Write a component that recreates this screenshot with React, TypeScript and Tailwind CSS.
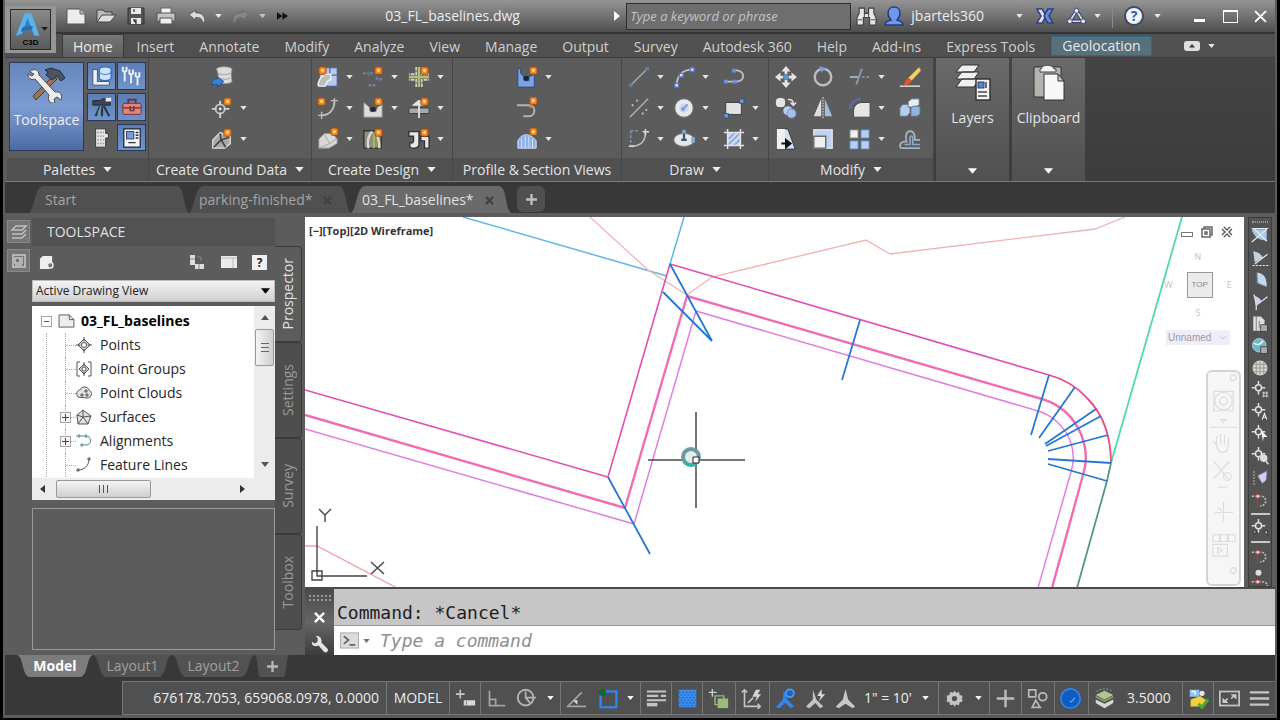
import type { ReactNode } from "react";

const ORANGE = "#f08a2c";

function Icon({ children, className = "size-[22px]" }: { children: ReactNode; className?: string }) {
  return (
    <svg viewBox="0 0 24 24" fill="none" className={`${className} shrink-0`} aria-hidden="true">
      {children}
    </svg>
  );
}

function Badge({ x = 18, y = 5 }: { x?: number; y?: number }) {
  return (
    <g>
      <rect x={x - 4} y={y - 4} width="8" height="8" rx="2" fill={ORANGE} stroke="#9c4a10" />
      <circle cx={x} cy={y} r="1.6" fill="#ffe08a" />
    </g>
  );
}

function Caret({ label, className = "text-[#e6e6e6]" }: { label: string; className?: string }) {
  return (
    <button type="button" aria-label={label} className={`flex h-4 w-[10px] shrink-0 items-center justify-center ${className}`}>
      <svg viewBox="0 0 8 5" className="h-[4px] w-[7px]">
        <path d="M0 0h8L4 5z" fill="currentColor" />
      </svg>
    </button>
  );
}

const icons: Record<string, ReactNode> = {
  importSurvey: (
    <>
      <path d="M6 3c2-3 14-3 17 0l-1 6 1 8c-2 3-13 3-16 0l1-7z" fill="#dcdcdc" stroke="#8a8a8a" />
      <path d="M8 8c4 2 9 2 13 0M9 13c4 2 9 2 12 0" stroke="#9a9a9a" />
      <path d="M1 17c2-3 5-3 6-3v-2l7 5-7 6v-3c-3 0-4 0-6 1z" fill="#3b82d6" stroke="#1c4f96" />
    </>
  ),
  points: (
    <>
      <circle cx="10" cy="13" r="5" stroke="#c4c4c4" strokeWidth="2" />
      <path d="M10 4v5M10 17v6M1 13h5M14 13h6" stroke="#d4d4d4" strokeWidth="2" />
      <circle cx="10" cy="13" r="1.5" fill="#eee" />
      <Badge />
    </>
  ),
  surfaces: (
    <>
      <path d="M2 13l8-8 11 4v8l-6 5H2z" fill="#a8a8a8" stroke="#dcdcdc" strokeWidth="1.5" />
      <path d="M3 21l8-8 5 8M10 6l1 7 9-3" stroke="#444" strokeWidth="1.8" />
      <Badge />
    </>
  ),
  parcel: (
    <>
      <path d="M3 2h19v20H5l-2-6z" fill="#b9cbe8" stroke="#3d5f99" />
      <path d="M14 2v8M14 10h8" stroke="#3f6fd0" strokeWidth="1.5" />
      <path d="M1 20C3 11 9 8 15 9v6c-4 0-5 3-6 7H2z" stroke="#f2f2f2" strokeWidth="1.5" fill="#bdbdbd" />
      <Badge x={6} />
    </>
  ),
  featureLine: (
    <>
      <path d="M5 20C13 20 19 14 19 5" stroke="#c0c0c0" strokeWidth="2" />
      <path d="M5 16v8M1 20h8M19 1v8M15 4h8" stroke="#c0c0c0" strokeWidth="1.5" />
      <Badge x={5} />
    </>
  ),
  grading: (
    <>
      <path d="M2 22V12l6-6h9l5 6v5l-9 5z" fill="#d8d8d8" stroke="#8f8f8f" />
      <path d="M8 7l6 10 7-5M2 22l12-5" stroke="#a4a4a4" />
      <Badge x={19} y={4} />
    </>
  ),
  alignment: (
    <>
      <path d="M1 8h6M9 8h5M15 14h7M7 21h8" stroke="#7c8994" strokeWidth="2" strokeDasharray="3 1.5" />
      <path d="M8 6v5M15 11l6 6" stroke="#4b7aa5" strokeWidth="2" />
      <Badge />
    </>
  ),
  profile: (
    <>
      <path d="M2 6l6 5 1 5h6l2-5 5-3v14H2z" fill="#dcdcdc" stroke="#8a8a8a" />
      <rect x="9" y="11" width="6" height="5" rx="2" fill="#262626" />
      <Badge />
    </>
  ),
  corridor: (
    <>
      <path d="M2 3h19v19H2z" fill="#8f8f80" stroke="#333" strokeWidth="1.5" />
      <path d="M7 22C5 12 8 7 11 4M19 22c0-8-1-13-5-18" stroke="#dcdcd0" strokeWidth="2.5" />
      <path d="M13 22V6" stroke="#9ec640" strokeWidth="2" />
      <Badge />
    </>
  ),
  intersection: (
    <>
      <path d="M9 1v8H1M15 1v8h8M9 23v-8H1M15 23v-8h8" stroke="#cfcfcf" strokeWidth="2" strokeDasharray="4 1" />
      <path d="M12 1v22M1 12h22" stroke="#b3c26a" strokeWidth="2.5" />
      <Badge />
    </>
  ),
  assembly: (
    <>
      <path d="M1 12h22v6H1z" fill="#a8a8a8" stroke="#3c3c3c" />
      <path d="M5 9h12V4h-6z" fill="#ececec" stroke="#ddd" />
      <path d="M12 4v19" stroke="#e2e2e2" strokeWidth="2" />
      <Badge />
    </>
  ),
  pipeNetwork: (
    <>
      <path d="M1 4h11v14c0 4-6 5-10 3v-5c3 1 4 0 4-2V9H1z" fill="#e8e8e8" stroke="#333" strokeWidth="1.5" />
      <path d="M14 9h9v13h-5V14h-4z" fill="#e8e8e8" stroke="#333" strokeWidth="1.5" />
      <Badge />
    </>
  ),
  profileView: (
    <>
      <path d="M2 2l3 2v4l4 4v4h5v-4l6-3v14H2z" fill="#7ba2e4" stroke="#2d4a80" />
      <rect x="8" y="11" width="6" height="5" rx="2" fill="#15233f" />
      <Badge x={19} y={5} />
    </>
  ),
  sampleLines: (
    <>
      <path d="M1 9h13c8 0 8 12 0 12H8" stroke="#b2b2b2" strokeWidth="2.2" />
      <path d="M15 12l4-6" stroke="#e08050" strokeWidth="2" />
      <Badge x={19} y={4} />
    </>
  ),
  sectionViews: (
    <>
      <path d="M2 22v-8c5-9 13-9 20 0v8z" fill="#8fb0ec" stroke="#d9e4fa" />
      <path d="M6 22V12M10 22V9M14 22V9M18 22V12" stroke="#dbe6fa" />
      <Badge x={19} y={4} />
    </>
  ),
  line: (
    <>
      <path d="M3 21L21 3" stroke="#a4abb3" strokeWidth="1.6" />
      <path d="M1 19h4v4H1zM19 1h4v4h-4z" fill="#5b80a8" />
    </>
  ),
  arc: (
    <>
      <path d="M4 21C4 11 10 4 21 4" stroke="#c0c0c0" strokeWidth="2" />
      <path d="M2 19h4v4H2zM7 8h4v4H7zM19 2h4v4h-4z" fill="#dde6fa" stroke="#5a76d6" strokeWidth="1.4" />
    </>
  ),
  polyline: (
    <>
      <path d="M12 5c12-2 14 12 2 12H2" stroke="#b8bec9" strokeWidth="2" />
      <path d="M10 3h4v4h-4zM11 15h4v4h-4zM1 15h4v4H1z" fill="#6c8fe0" />
    </>
  ),
  xline: (
    <>
      <path d="M2 22L22 2" stroke="#b0b0b0" strokeWidth="1.6" />
      <path d="M4 9h2M9 4h2M15 18h2M19 14h2" stroke="#c8c8c8" strokeWidth="2" />
    </>
  ),
  circle: (
    <>
      <circle cx="12" cy="12" r="10" fill="#e6e9ee" stroke="#7a7a7a" />
      <circle cx="12" cy="12" r="5" fill="#cdd6ec" />
      <path d="M11 13l5-5" stroke="#7c96dc" strokeWidth="2" />
      <circle cx="11" cy="13" r="2" fill="#7f98dc" />
    </>
  ),
  rectangle: (
    <>
      <rect x="3" y="6" width="17" height="13" fill="#e2e2e2" stroke="#3c3c3c" />
      <path d="M18 2h5v5h-5zM1 18h5v5H1z" fill="#6c97c6" stroke="#2d5586" />
    </>
  ),
  spline: (
    <>
      <path d="M3 3v17M3 3h10" stroke="#7f93b5" strokeWidth="1.8" strokeDasharray="3 2" />
      <path d="M4 20c10 0 15-6 15-15" stroke="#b8bec6" strokeWidth="1.8" />
      <path d="M16 4h7M19 1v7M1 20h6" stroke="#dadada" strokeWidth="1.6" />
    </>
  ),
  ellipse: (
    <>
      <ellipse cx="12" cy="13" rx="11" ry="7" fill="#e4e8ea" stroke="#888" />
      <path d="M12 3v10M9 13h6" stroke="#33577a" strokeWidth="2.5" />
      <path d="M20 10h4v6h-4z" fill="#7faad2" />
      <path d="M10 2h4v4h-4z" fill="#7faad2" />
    </>
  ),
  hatch: (
    <>
      <rect x="5" y="5" width="14" height="14" fill="#c9d8f2" />
      <path d="M6 12l7-7M6 18L18 6M12 19l7-7" stroke="#7c9ad8" strokeWidth="1.4" />
      <path d="M5 1v22M19 1v22M1 5h22M1 19h22" stroke="#e4e4e4" strokeWidth="1.6" />
    </>
  ),
  move: (
    <>
      <path d="M12 0l5 6H7zM12 24l5-6H7zM0 12l6-5v10zM24 12l-6-5v10z" fill="#e4e4e4" />
      <path d="M12 4v5M12 15v5M4 12h5M15 12h5" stroke="#e4e4e4" strokeWidth="3" />
      <rect x="9.500" y="9.500" width="5" height="5" fill="#5f8fd6" />
    </>
  ),
  rotate: (
    <>
      <circle cx="12" cy="12" r="9" stroke="#bcbcbc" strokeWidth="2.600" />
      <path d="M8 0l7 3-5 4z" fill="#6ea0e0" />
    </>
  ),
  trim: (
    <>
      <path d="M1 12h10" stroke="#9fb4d0" strokeWidth="2" />
      <path d="M14 12h9" stroke="#838d9a" strokeWidth="2" strokeDasharray="3 2" />
      <path d="M8 20L14 3" stroke="#8797b0" strokeWidth="2.200" />
    </>
  ),
  erase: (
    <>
      <path d="M1 22h22" stroke="#d2d2d2" strokeWidth="1.800" />
      <path d="M22 1l2 4-10 11-4-3z" fill="#f2d16b" stroke="#a5803a" />
      <path d="M10 13l4 3-2 3-8 3c2-2 2-6 6-9z" fill="#e0572a" />
    </>
  ),
  copy: (
    <>
      <rect x="1" y="1" width="10" height="10" rx="4" fill="#e4e4e4" />
      <circle cx="14" cy="15" r="5" fill="#b9cdee" />
      <circle cx="18" cy="18" r="5" fill="#a7c0ea" stroke="#6a8bc4" />
      <path d="M14 3c4-1 6 1 6 5M17 6l3 3 3-3" stroke="#dcdcdc" strokeWidth="1.800" />
    </>
  ),
  mirror: (
    <>
      <path d="M10 2v19H2z" fill="#e0e0e0" />
      <path d="M14 2v19h8z" fill="#9ebdd8" />
      <path d="M12 0v24" stroke="#f0f0f0" strokeDasharray="2 1" />
    </>
  ),
  fillet: (
    <>
      <path d="M5 22v-7c0-5 4-9 9-9h9v16z" fill="#e6e6e6" stroke="#444" />
      <path d="M1 13C2 6 7 2 13 2" stroke="#5a70a0" strokeWidth="2.400" />
    </>
  ),
  explode: (
    <>
      <path d="M1 12l3-4h8v9l-3 4H1z" fill="#b4cdee" stroke="#64707e" />
      <path d="M10 5l4-3h8v6l-3 3h-9z" fill="#e6eefa" stroke="#64707e" />
      <path d="M13 12l3-2h7v8l-3 3h-7z" fill="#8fb2e0" stroke="#64707e" />
    </>
  ),
  stretch: (
    <>
      <path d="M2 1h12l8 22H2z" fill="#cfe0f6" stroke="#333" />
      <path d="M2 1h9v22H2z" fill="#f1f1f1" />
      <path d="M7 17h8M12 13l5 4-5 4z" stroke="#111" strokeWidth="2.200" fill="#111" />
    </>
  ),
  scale: (
    <>
      <rect x="2" y="2" width="20" height="20" fill="#bcd2ef" stroke="#e6e6e6" strokeWidth="1.500" />
      <rect x="2" y="9" width="13" height="13" fill="#eee" stroke="#666" strokeWidth="1.500" />
    </>
  ),
  array: (
    <>
      <rect x="1" y="2" width="9" height="9" fill="#efefef" stroke="#777" />
      <path d="M13 2h9v9h-9zM1 14h9v9H1zM13 14h9v9h-9z" fill="#b4d0f2" stroke="#5e7da8" />
    </>
  ),
  offset: (
    <>
      <path d="M8 13c-3-13 11-13 9 0h6M8 13v2c-8-1-8 7-5 7h20" stroke="#a9b0b6" strokeWidth="2" />
      <path d="M6 18h6v-7c0-3 3-3 3 0v7h8" stroke="#8aa7c4" strokeWidth="1.800" />
    </>
  ),
};

type Cell = [name: string, caret?: boolean] | null;

function Panel({
  title,
  caret = true,
  className,
  children,
}: {
  title: string;
  caret?: boolean;
  className: string;
  children: ReactNode;
}) {
  return (
    <section className={`flex shrink-0 flex-col border-r border-[#464646] ${className}`}>
      <div className="flex-1 pt-[3px]">{children}</div>
      <button type="button" className="flex h-[23px] items-center justify-center gap-2 bg-[#505050] text-sm whitespace-nowrap text-[#e4e4e4]">
        {title}
        {caret && (
          <svg viewBox="0 0 10 6" className="h-[5px] w-[9px]">
            <path d="M0 0h10L5 6z" fill="#eee" />
          </svg>
        )}
      </button>
    </section>
  );
}

function ToolGrid({ cells, className }: { cells: Cell[]; className: string }) {
  return (
    <div className={`grid auto-rows-[31px] ${className}`}>
      {cells.map((c, i) =>
        c ? (
          <div key={i} className="flex items-center gap-[5px]">
            <button type="button" aria-label={c[0]}>
              <Icon>{icons[c[0]]}</Icon>
            </button>
            {c[1] && <Caret label={`${c[0]} options`} />}
          </div>
        ) : (
          <span key={i} />
        ),
      )}
    </div>
  );
}

function TitleButton({ label, children, className = "w-[30px]" }: { label: string; children: ReactNode; className?: string }) {
  return (
    <button type="button" aria-label={label} className={`flex shrink-0 items-center justify-center ${className}`}>
      {children}
    </button>
  );
}

function TitleBar() {
  return (
    <header className="relative flex h-[34px] items-center border-b-2 border-[#343434] bg-linear-to-b from-[#949494] via-[#737373] to-[#4e4e4e] pl-[56px] text-sm text-[#ececec]">
      <button
        type="button"
        aria-label="Application menu"
        className="absolute top-[6px] left-0 z-10 flex h-[47px] w-[51px] items-center justify-center bg-[#969696]"
      >
        <span className="flex h-[41px] w-[41px] flex-col items-center border border-[#2a2a2a] bg-linear-to-b from-[#8a8a8a] to-[#5a5a5a]">
          <svg viewBox="0 0 40 28" className="h-[28px] w-[39px]">
            <path d="M5 26L14 3h7l8 23h-6l-2-6-7 2-3 4z" fill="#2f7fc0" />
            <path d="M14 3h7l8 23h-5L17 8l-6 16-6 2z" fill="#5cb2ea" />
            <path d="M12 17l10-1v3l-12 3z" fill="#2b6ba6" />
            <path d="M31 17h7l-3.500 4z" fill="#1c1c1c" />
          </svg>
          <span className="font-['Liberation_Sans'] text-[8px] leading-[9px] font-bold text-black">C3D</span>
        </span>
      </button>
      <TitleButton label="New">
        <svg viewBox="0 0 22 18" className="h-[18px] w-[22px]">
          <path d="M2 2h13l5 5v10H2z" fill="#ececec" stroke="#555" />
          <path d="M15 2v5h5" fill="#bbb" stroke="#666" />
        </svg>
      </TitleButton>
      <TitleButton label="Open">
        <svg viewBox="0 0 22 18" className="h-[18px] w-[22px]">
          <path d="M2 15V3h6l2 2h7v4" fill="#bdbdbd" stroke="#444" />
          <path d="M2 15l5-7h14l-6 7z" fill="#dedede" stroke="#444" />
        </svg>
      </TitleButton>
      <TitleButton label="Save">
        <svg viewBox="0 0 20 20" className="size-[20px]">
          <path d="M2 2h16v16H2z" fill="#555" stroke="#333" />
          <path d="M5 2h10v6H5zM5 12h10v6H5z" fill="#e8e8e8" />
          <path d="M8 3v3M7 14h3v4" stroke="#555" strokeWidth="1.500" />
        </svg>
      </TitleButton>
      <TitleButton label="Plot">
        <svg viewBox="0 0 20 20" className="size-[20px]">
          <path d="M5 2h10v6H5z" fill="#f2f2f2" stroke="#666" />
          <path d="M1 7h18v8H1z" fill="#c4c4c4" stroke="#555" />
          <path d="M4 12h12v6H4z" fill="#f0f0f0" stroke="#555" />
        </svg>
      </TitleButton>
      <TitleButton label="Undo" className="w-[32px]">
        <svg viewBox="0 0 20 16" className="h-[15px] w-[19px]">
          <path d="M1 6l7-5v3c7 0 10 3 10 10h-3c0-4-2-5-7-5v3z" fill="#dcdcdc" stroke="#555" />
        </svg>
      </TitleButton>
      <Caret label="Undo history" />
      <TitleButton label="Redo" className="w-[34px]">
        <svg viewBox="0 0 20 16" className="h-[15px] w-[19px]">
          <path d="M19 6l-7-5v3C5 4 2 7 2 14h3c0-4 2-5 7-5v3z" fill="#868686" stroke="#6a6a6a" />
        </svg>
      </TitleButton>
      <Caret label="Redo history" className="text-[#c4c4c4]" />
      <TitleButton label="Customize toolbar">
        <svg viewBox="0 0 12 8" className="h-[8px] w-[11px]">
          <path d="M0 0l6 4-6 4zM6 0l6 4-6 4z" fill="#111" />
        </svg>
      </TitleButton>
      <h1 className="min-w-0 flex-1 truncate text-center text-sm">03_FL_baselines.dwg</h1>
      <TitleButton label="Show search" className="w-[18px]">
        <svg viewBox="0 0 6 10" className="h-[10px] w-[6px]">
          <path d="M0 0l6 5-6 5z" fill="#fff" />
        </svg>
      </TitleButton>
      <input
        type="text"
        aria-label="Search help"
        placeholder="Type a keyword or phrase"
        className="h-[27px] w-[225px] border border-[#2e2e2e] bg-[#6e6e6e] px-[3px] text-[13px] italic placeholder:text-[#c4c4c4]"
      />
      <TitleButton label="Search">
        <svg viewBox="0 0 20 20" className="size-[21px]">
          <path d="M3 2h5v5h4V2h5v5l2 4v7h-6v-7H7v7H1v-7l2-4z" fill="#e6e6e6" stroke="#3b3b3b" />
          <path d="M2 13h4M14 13h4M8 7v4M12 7v4" stroke="#555" />
        </svg>
      </TitleButton>
      <button type="button" className="flex items-center gap-1.5">
        <svg viewBox="0 0 22 22" className="ml-0.5 size-[22px]">
          <path d="M2 20c0-3 2-4 6-5-2-2-3-4-3-7 0-8 12-8 12 0 0 3-1 5-3 7 4 1 6 2 6 5z" fill="#6d98ee" stroke="#203c86" strokeWidth="1.500" />
        </svg>
        <span>jbartels360</span>
      </button>
      <span className="w-[30px]" />
      <Caret label="Account options" />
      <TitleButton label="Exchange" className="ml-1 w-[34px]">
        <svg viewBox="0 0 20 18" className="h-[18px] w-[20px]">
          <path d="M2 2h5l4 7-4 7H2l4-7z" fill="#dde5f6" stroke="#2b3f86" strokeWidth="1.500" />
          <path d="M18 2h-5L9 9l4 7h5l-4-7z" fill="#6a8ade" stroke="#2b3f86" strokeWidth="1.500" />
        </svg>
      </TitleButton>
      <TitleButton label="Autodesk 360" className="w-[28px]">
        <svg viewBox="0 0 22 20" className="h-[19px] w-[21px]" fill="none">
          <path d="M11 4L4 15h14z" stroke="#3d4872" strokeWidth="4" />
          <path d="M11 4L4 15h14z" stroke="#d2d8ee" strokeWidth="1.800" />
          <circle cx="11" cy="4" r="2.500" fill="#e6e9f5" stroke="#3d4872" />
          <circle cx="4" cy="15" r="2.500" fill="#e6e9f5" stroke="#3d4872" />
          <circle cx="18" cy="15" r="2.500" fill="#e6e9f5" stroke="#3d4872" />
        </svg>
      </TitleButton>
      <Caret label="Autodesk 360 options" className="ml-0.5 text-[#e6e6e6]" />
      <span className="mx-2.5 h-6 w-px bg-[#8a8a8a]" />
      <TitleButton label="Help" className="w-[22px]">
        <span className="flex size-[20px] items-center justify-center rounded-full border-2 border-[#3a4a6a] bg-[#f2f4f8] text-[14px] leading-none font-bold text-[#2c5fc0]">
          ?
        </span>
      </TitleButton>
      <Caret label="Help options" className="mr-[22px] ml-[7px] text-[#e6e6e6]" />
      <TitleButton label="Minimize">
        <span className="mt-2 h-[3px] w-[11px] bg-white" />
      </TitleButton>
      <TitleButton label="Maximize" className="w-[32px]">
        <span className="h-[13px] w-[15px] border border-t-2 border-white" />
      </TitleButton>
      <TitleButton label="Close" className="mr-[1px] w-[28px]">
        <svg viewBox="0 0 12 12" className="size-[13px]">
          <path d="M1 1l10 10M11 1L1 11" stroke="#fff" strokeWidth="1.800" />
        </svg>
      </TitleButton>
    </header>
  );
}

const tabs = [
  "Insert",
  "Annotate",
  "Modify",
  "Analyze",
  "View",
  "Manage",
  "Output",
  "Survey",
  "Autodesk 360",
  "Help",
  "Add-ins",
  "Express Tools",
];

function RibbonTabs() {
  return (
    <nav className="flex h-[24px] items-stretch gap-px border-b border-[#3c3c3c] bg-[#505050] pl-[57px] text-sm text-[#cfcfcf]">
      <button type="button" className="border border-b-0 border-[#3a3a3a] bg-linear-to-b from-[#767676] to-[#5f5f5f] px-[10px] leading-[24px] text-[#ececec]">
        Home
      </button>
      {tabs.map((t) => (
        <button type="button" key={t} className="px-3 leading-[25px] whitespace-nowrap">
          {t}
        </button>
      ))}
      <button type="button" className="ml-[3px] h-[20px] self-center border border-[#2f6a8c] bg-[#56707c] px-[10px] leading-[18px] text-[#e8e8e8]">
        Geolocation
      </button>
      <button type="button" aria-label="Ribbon display" className="ml-[31px] flex items-center">
        <svg viewBox="0 0 16 10" className="h-[10px] w-[16px]">
          <rect width="16" height="10" rx="3" fill="#e0e0e0" />
          <path d="M5 6.500h6L8 3z" fill="#333" />
        </svg>
      </button>
      <span className="ml-1.5 flex items-center">
        <Caret label="Ribbon display options" />
      </span>
    </nav>
  );
}

function PaletteButton({ label, on = true, children }: { label: string; on?: boolean; children: ReactNode }) {
  return (
    <button
      type="button"
      aria-label={label}
      className={
        on
          ? "flex items-center justify-center border border-[#27395a] bg-linear-to-b from-[#5c7db5] to-[#6f93cb]"
          : "flex items-center justify-center"
      }
    >
      {children}
    </button>
  );
}

function Ribbon() {
  return (
    <div className="flex h-[124px] border-b border-[#7a7a7a] bg-[#5c5c5c] pl-0.5 text-sm text-[#e4e4e4]">
      <Panel title="Palettes" className="w-[142px]">
        <div className="flex gap-[3px] pt-px pl-0.5">
          <button
            type="button"
            className="flex h-[89px] w-[75px] flex-col items-center border border-[#27395a] bg-linear-to-b from-[#6786bb] via-[#7c9dd2] to-[#4d6ba3] pt-1 text-[#f0f0f0]"
          >
            <svg viewBox="0 0 40 36" className="h-[36px] w-[40px]">
              <path d="M6 29L26 9l4 3L9 33z" fill="#9c7358" stroke="#4e3626" />
              <path d="M18 3l6-2 9 3 5 7-4 3-4-5-5 4-6-5 2-3z" fill="#4a5563" stroke="#222c3a" />
              <path d="M3 5c3-4 9-3 9 3l16 17c5-1 8 3 6 8l-4-3-3 2 1 4c-5 1-8-3-6-8L8 12c-4 2-7-1-7-5l4 2 2-2z" fill="#ececec" stroke="#4a4a4a" />
            </svg>
            <span className="mt-[7px]">Toolspace</span>
          </button>
          <div className="grid grid-cols-[29px_29px] grid-rows-[28px_28px_27px] gap-x-px gap-y-[3px]">
            <PaletteButton label="Panorama">
              <Icon>
                <path d="M2 5h5v13h13v4H2z" fill="#f0f0f0" stroke="#3a5180" />
                <path d="M9 5c0-4 13-4 13 0v9c0 4-13 4-13 0z" fill="#cfe4fb" stroke="#3670bb" strokeWidth="1.500" />
                <path d="M9 8c3 3 10 3 13 0" stroke="#3670bb" />
              </Icon>
            </PaletteButton>
            <PaletteButton label="Tool palettes">
              <Icon>
                <path
                  d="M2 2v4l2 2 2-2V2M4 8v10M9 5v4l2 2 2-2V5M11 11v9M16 8v4l2 2 2-2V8M18 14v8"
                  stroke="#e8edf5"
                  strokeWidth="2.200"
                />
              </Icon>
            </PaletteButton>
            <PaletteButton label="Survey">
              <Icon>
                <path d="M2 5h8l3-2h8v7H2z" fill="#3a4658" stroke="#20293a" />
                <path d="M10 11L5 22M12 11v11M14 11l6 11" stroke="#2c3850" strokeWidth="2.400" />
                <rect x="16" y="2" width="6" height="4" fill="#e8e8e8" />
                <path d="M11 11l-3 8" stroke="#7fa887" strokeWidth="1.500" />
              </Icon>
            </PaletteButton>
            <PaletteButton label="Toolbox">
              <Icon>
                <path d="M8 8V4h8v4" stroke="#712f2f" strokeWidth="2" />
                <rect x="2" y="8" width="20" height="12" rx="1" fill="#e0857c" stroke="#712f2f" />
                <path d="M2 13h20M10 11v5h4v-5" stroke="#712f2f" strokeWidth="1.500" />
              </Icon>
            </PaletteButton>
            <PaletteButton label="Calculator" on={false}>
              <Icon>
                <path d="M5 2h11v5h3v5h-3v10H5z" fill="#e2e2e2" stroke="#333" />
                <path d="M7 6h7M7 10h7M7 14h7M7 18h7" stroke="#8a8a8a" strokeWidth="1.500" strokeDasharray="1.500 1.500" />
              </Icon>
            </PaletteButton>
            <PaletteButton label="Properties">
              <Icon>
                <rect x="3" y="2" width="18" height="20" fill="#f4f4f4" stroke="#26324a" strokeWidth="1.500" />
                <rect x="6" y="5" width="8" height="8" fill="#7c9cd8" stroke="#223a74" />
                <path d="M16 6h3M16 9h3M16 12h3M8 17h8" stroke="#333" strokeWidth="1.500" />
              </Icon>
            </PaletteButton>
          </div>
        </div>
      </Panel>

      <Panel title="Create Ground Data" className="w-[163px]">
        <ToolGrid className="pl-[62px]" cells={[["importSurvey"], ["points", true], ["surfaces", true]]} />
      </Panel>

      <Panel title="Create Design" className="w-[141px]">
        <ToolGrid
          className="grid-cols-[45px_46px_40px] pl-[5px]"
          cells={[
            ["parcel", true],
            ["alignment", true],
            ["intersection", true],
            ["featureLine", true],
            ["profile", true],
            ["assembly", true],
            ["grading", true],
            ["corridor"],
            ["pipeNetwork", true],
          ]}
        />
      </Panel>

      <Panel title="Profile & Section Views" caret={false} className="w-[169px]">
        <ToolGrid className="pl-[63px]" cells={[["profileView", true], ["sampleLines"], ["sectionViews", true]]} />
      </Panel>

      <Panel title="Draw" className="w-[147px]">
        <ToolGrid
          className="grid-cols-[45px_50px_40px] pl-[6px]"
          cells={[
            ["line", true],
            ["arc", true],
            ["polyline"],
            ["xline", true],
            ["circle", true],
            ["rectangle", true],
            ["spline", true],
            ["ellipse", true],
            ["hatch", true],
          ]}
        />
      </Panel>

      <Panel title="Modify" className="w-[165px]">
        <ToolGrid
          className="grid-cols-[37px_37px_50px_30px] pl-[6px]"
          cells={[
            ["move"],
            ["rotate"],
            ["trim", true],
            ["erase"],
            ["copy"],
            ["mirror"],
            ["fillet", true],
            ["explode"],
            ["stretch"],
            ["scale"],
            ["array", true],
            ["offset"],
          ]}
        />
      </Panel>

      <div className="flex flex-1 gap-[3px] bg-linear-to-b from-[#444444] to-[#3c3c3c] pl-0.5">
        <button type="button" className="flex w-[73px] flex-col items-center bg-linear-to-b from-[#6a6a6a] to-[#505050] pt-[6px]">
          <svg viewBox="0 0 36 38" className="h-[38px] w-[36px]">
            <path d="M7 1h17l-5 7H1zM7 8h17l-5 7H1zM7 15h17l-5 8H1z" fill="#f0f0f0" stroke="#333" />
            <rect x="21" y="15" width="14" height="21" fill="#f4f4f4" stroke="#333" strokeWidth="1.500" />
            <rect x="23" y="18" width="6" height="6" fill="#5c83d0" stroke="#24427e" />
            <path d="M31 18v6M23 28h9M23 32h9" stroke="#444" strokeWidth="1.500" />
          </svg>
          <span className="mt-[6px]">Layers</span>
          <svg viewBox="0 0 10 6" className="mt-auto mb-[7px] h-[6px] w-[9px]">
            <path d="M0 0h10L5 6z" fill="#fff" />
          </svg>
        </button>
        <button type="button" className="flex w-[73px] flex-col items-center bg-linear-to-b from-[#6a6a6a] to-[#505050] pt-[6px]">
          <svg viewBox="0 0 34 38" className="h-[38px] w-[34px]">
            <path d="M2 3h27v30H2z" fill="#b4b4ae" stroke="#333" />
            <path d="M9 5c1-5 12-5 13 0h2v3H8V5z" fill="#f4f4f4" stroke="#444" />
            <path d="M12 10h14l6 7v19H12z" fill="#f7f7f7" stroke="#333" />
            <path d="M26 10v7h6z" fill="#c8c8c8" stroke="#333" />
          </svg>
          <span className="mt-[6px]">Clipboard</span>
          <svg viewBox="0 0 10 6" className="mt-auto mb-[7px] h-[6px] w-[9px]">
            <path d="M0 0h10L5 6z" fill="#fff" />
          </svg>
        </button>
      </div>
    </div>
  );
}

function FileTab({ label, active, closable, className }: { label: string; active?: boolean; closable?: boolean; className: string }) {
  return (
    <div className={`relative flex items-center pt-0.5 ${className}`}>
      <svg viewBox="0 0 160 28" preserveAspectRatio="none" className="absolute inset-0 size-full">
        <path d="M0 28c6-4 5-26 14-27h134c8 1 6 22 12 27z" fill={active ? "#6a6a6a" : "#505050"} />
      </svg>
      <button type="button" className={`relative ${active ? "text-[#e2e2e2]" : "text-[#a4a4a4]"}`}>
        {label}
      </button>
      {closable && (
        <button type="button" aria-label={`Close ${label}`} className="relative ml-[11px]">
          <svg viewBox="0 0 10 10" className="size-[9px]">
            <path d="M1 1l8 8M9 1L1 9" stroke="#424242" strokeWidth="2.500" />
          </svg>
        </button>
      )}
    </div>
  );
}

function FileTabs() {
  return (
    <div className="flex h-[31px] items-stretch bg-[#383838] pt-[3px] pl-[24px] text-sm">
      <FileTab label="Start" className="w-[160px] pl-[16px]" />
      <FileTab label="parking-finished*" closable className="w-[162px] pl-[10px]" />
      <FileTab label="03_FL_baselines*" active closable className="w-[160px] pl-[11px]" />
      <button type="button" aria-label="New drawing" className="my-px ml-[6px] flex w-[28px] items-center justify-center rounded-md bg-[#505050]">
        <svg viewBox="0 0 12 12" className="size-[11px]">
          <path d="M6 0v12M0 6h12" stroke="#c0c0c0" strokeWidth="2.500" />
        </svg>
      </button>
    </div>
  );
}

const treeItems: { label: string; expandable?: boolean; icon: ReactNode }[] = [
  {
    label: "Points",
    icon: (
      <>
        <path d="M8 2l6 6-6 6-6-6z" fill="#cfcfcf" />
        <circle cx="8" cy="8" r="2.500" fill="#fff" />
        <path d="M8 0v4M8 12v4M0 8h4M12 8h4" />
      </>
    ),
  },
  {
    label: "Point Groups",
    icon: (
      <>
        <path d="M4 1H1v14h3M12 1h3v14h-3" />
        <path d="M8 3l5 5-5 5-5-5z" fill="#cfcfcf" />
        <circle cx="8" cy="8" r="2" fill="#fff" />
        <path d="M8 1v4M8 11v4" />
      </>
    ),
  },
  {
    label: "Point Clouds",
    icon: (
      <>
        <path d="M2 12C-1 8 2 5 4 5c1-4 8-4 9 0 4 2 3 8-2 8z" fill="#e4e4e4" />
        <path d="M5 9h2v2H5zM9 5h2v2H9zM10 9h2v2h-2z" />
      </>
    ),
  },
  { label: "Surfaces", expandable: true, icon: <path d="M1 6l6-5 8 6-3 8H2zM7 1v7M7 8L2 15M7 8l5 7M7 8l8-1M7 8L1 6" fill="#e0e0e0" /> },
  { label: "Alignments", expandable: true, icon: <path d="M0 3h10c6 0 6 9 0 9H4M3 1v4M10 1v4M6 10v4" stroke="#4f8296" /> },
  { label: "Feature Lines", icon: <path d="M2 13c6 0 11-4 11-11M2 11v4M0 13h4M11 2h4M13 0v4" /> },
];

function TreeView() {
  return (
    <div className="bg-white">
      <div className="flex">
        <div className="h-[172px] min-w-0 flex-1 overflow-hidden pt-[3px] text-[#262626]">
          <div className="flex h-6 items-center pl-[9px] text-sm font-bold text-black">
            <button type="button" aria-label="Collapse drawing" className="flex size-[11px] items-center justify-center border border-[#a4a4a4]">
              <span className="h-px w-[5px] bg-[#555]" />
            </button>
            <svg viewBox="0 0 18 15" className="mx-[6px] h-[14px] w-[17px]">
              <path d="M1 1h11l5 5v8H1z" fill="#eee" stroke="#555" />
              <path d="M12 1v5h5" fill="none" stroke="#555" />
            </svg>
            03_FL_baselines
          </div>
          <ul className="ml-[14px] border-l border-dotted border-[#aaa] text-sm">
            {treeItems.map((item) => (
              <li key={item.label} className="relative ml-[18px] flex h-6 items-center border-l border-dotted border-[#aaa]">
                <span className="w-[10px] border-t border-dotted border-[#aaa]" />
                {item.expandable && (
                  <button
                    type="button"
                    aria-label={`Expand ${item.label}`}
                    className="absolute -left-[6px] flex size-[11px] items-center justify-center border border-[#a4a4a4] bg-[#f4f4f4]"
                  >
                    <svg viewBox="0 0 7 7" className="size-[7px]">
                      <path d="M3.500 0v7M0 3.500h7" stroke="#444" />
                    </svg>
                  </button>
                )}
                <svg viewBox="0 0 16 16" className="mr-2 size-4" fill="none" stroke="#555">
                  {item.icon}
                </svg>
                {item.label}
              </li>
            ))}
          </ul>
        </div>
        <div className="flex w-[21px] flex-col items-center bg-[#ececec] pt-[9px] pb-[11px]">
          <svg viewBox="0 0 8 5" className="h-[5px] w-2">
            <path d="M0 5h8L4 0z" fill="#555" />
          </svg>
          <span className="mt-[9px] flex h-[37px] w-[19px] flex-col items-center justify-center gap-[3px] rounded-xs border border-[#999] bg-linear-to-r from-[#f4f4f4] to-[#cfcfcf]">
            <span className="h-px w-2 bg-[#666]" />
            <span className="h-px w-2 bg-[#666]" />
            <span className="h-px w-2 bg-[#666]" />
          </span>
          <svg viewBox="0 0 8 5" className="mt-auto h-[5px] w-2">
            <path d="M0 0h8L4 5z" fill="#555" />
          </svg>
        </div>
      </div>
      <div className="flex h-[22px] items-center bg-[#ececec] px-2">
        <svg viewBox="0 0 5 8" className="h-2 w-[5px]">
          <path d="M5 0v8L0 4z" fill="#333" />
        </svg>
        <span className="ml-[11px] flex h-[18px] w-[95px] items-center justify-center gap-[3px] rounded-xs border border-[#999] bg-linear-to-b from-[#f4f4f4] to-[#cfcfcf]">
          <span className="h-2 w-px bg-[#555]" />
          <span className="h-2 w-px bg-[#555]" />
          <span className="h-2 w-px bg-[#555]" />
        </span>
        <svg viewBox="0 0 5 8" className="mr-[22px] ml-auto h-2 w-[5px]">
          <path d="M0 0v8l5-4z" fill="#333" />
        </svg>
      </div>
    </div>
  );
}

function Toolspace() {
  return (
    <aside className="flex shrink-0">
      <div className="flex w-[27px] flex-col gap-[6px] pt-[7px] pl-0.5">
        <button type="button" aria-label="Layers palette" className="flex size-[23px] items-center justify-center border border-[#888] bg-[#757575]">
          <svg viewBox="0 0 18 16" className="h-4 w-[18px]" fill="none" stroke="#c0c0c0" strokeWidth="1.500">
            <path d="M6 2h10l-4 4H2zM2 10h10l4-4M2 14h10l4-4" />
          </svg>
        </button>
        <button type="button" aria-label="Properties palette" className="flex size-[23px] items-center justify-center border border-[#888] bg-[#757575]">
          <svg viewBox="0 0 14 14" className="size-[14px]" fill="none" stroke="#c8c8c8" strokeWidth="1.500">
            <path d="M1 1h12v12H1zM3 4h5v5H3zM10 3v7M3 11h7" />
          </svg>
        </button>
      </div>
      <div className="flex w-[243px] flex-col pb-[5px]">
        <h2 className="mt-[5px] bg-[#525252] pl-[15px] text-sm leading-[28px] text-[#e0e0e0]">TOOLSPACE</h2>
        <div className="flex h-[34px] items-center pr-2 pb-0.5 pl-[7px]">
          <button type="button" aria-label="Item view">
            <svg viewBox="0 0 16 16" className="size-[15px]">
              <path d="M1 4l3-3h10v8a4 4 0 0 0-3 6H1z" fill="#eee" />
              <circle cx="12" cy="11" r="3" fill="#777" stroke="#eee" strokeWidth="1.500" />
            </svg>
          </button>
          <button type="button" aria-label="Preview" className="ml-auto">
            <svg viewBox="0 0 16 16" className="size-4">
              <path d="M1 1h5v10H1zM6 10h9v5H6z" fill="#ddd" />
              <path d="M1 5h5M10 10v5M8 3h4v4" stroke="#888" fill="none" />
            </svg>
          </button>
          <button type="button" aria-label="Panorama view" className="ml-4">
            <svg viewBox="0 0 16 14" className="h-[14px] w-4">
              <path d="M0 1h16v12H0z" fill="#eaeaea" />
              <path d="M0 3h16M12 3v10" stroke="#bbb" />
            </svg>
          </button>
          <button type="button" aria-label="Toolspace help" className="ml-[15px] size-[15px] bg-[#f0f0f0] text-xs leading-[15px] font-bold text-[#222]">
            ?
          </button>
        </div>
        <div className="relative">
          <select
            aria-label="View"
            className="block h-[22px] w-full appearance-none border border-[#bbb] bg-linear-to-b from-[#f4f4f4] to-[#d0d0d0] pl-[3px] text-xs text-[#222]"
          >
            <option>Active Drawing View</option>
          </select>
          <svg viewBox="0 0 10 6" className="pointer-events-none absolute top-2 right-[5px] h-[6px] w-[9px]">
            <path d="M0 0h10L5 6z" fill="#000" />
          </svg>
        </div>
        <div className="mt-[4px]">
          <TreeView />
        </div>
        <div className="mt-[8px] flex-1 border border-[#9a9a9a]" />
      </div>
      <div className="flex w-[27px] flex-col pt-[33px] text-sm">
        {["Prospector", "Settings", "Survey", "Toolbox"].map((t, i) => (
          <button
            type="button"
            key={t}
            className={`flex h-24 items-center justify-center rounded-r-sm border border-l-0 border-[#3a3a3a] ${
              i === 0 ? "bg-[#5c5c5c] text-[#e0e0e0]" : "bg-[#4e4e4e] text-[#999999]"
            }`}
          >
            <span className="rotate-180 [writing-mode:vertical-rl]">{t}</span>
          </button>
        ))}
      </div>
    </aside>
  );
}

function Drawing() {
  return (
    <svg viewBox="305 217 939 370" preserveAspectRatio="xMinYMin slice" className="absolute inset-0 size-full" fill="none">
      <g stroke="#5fb8e0" strokeWidth="1.500">
        <path d="M463 217L667 276M684 217L670 264" />
      </g>
      <path d="M590 217L648 270L687 295L712 277L866 240L890 254L1095 229L1125 217" stroke="#f0b3b3" strokeWidth="1.300" />
      <path d="M305 546H317L397 588" stroke="#f2a0a8" strokeWidth="1.300" />
      <path d="M1182 217L1111 463" stroke="#4fd8b4" strokeWidth="1.800" />
      <path d="M1111 463L1107 481L1077 588" stroke="#559680" strokeWidth="1.800" />
      <path d="M305 390L608 477L670 264L1049 375" stroke="#e04fb4" strokeWidth="1.600" />
      <path d="M1049 375C1064 379 1078 388 1087 398C1103 414 1111 437 1111 463" stroke="#ea4a86" strokeWidth="1.800" />
      <path
        d="M305 415L625 508L687 296L1042 399C1062 405 1074 418 1081 434C1087 449 1087 463 1083 475L1052 588"
        stroke="#f06cb4"
        strokeWidth="2.400"
      />
      <path
        d="M305 429L634 524L696 311L1038 411C1052 415 1064 426 1070 440C1074 451 1074 463 1071 472L1038 588"
        stroke="#e07fe0"
        strokeWidth="1.500"
      />
      <path
        d="M670 264L712 341L663 292M608 477L650 554M860 320L842 380M1049 375L1031 435M1075 387L1039 438M1096 409L1045 444M1101 416L1046 446M1108 435L1048 451M1111 463L1048 459M1107 481L1048 464"
        stroke="#2478d4"
        strokeWidth="1.800"
      />
      <path d="M648 460H745M696 412V508" stroke="#4a4a4a" strokeWidth="1.500" />
      <circle cx="691" cy="457" r="8" stroke="#6c9a9e" strokeWidth="4" fill="#e4ecec" />
      <path d="M684 461a8 8 0 0 0 14 0" stroke="#2fb8a8" strokeWidth="3" />
      <path d="M693 457h6v6h-6z" fill="#fff" stroke="#222" />
      <g stroke="#444" strokeWidth="1.400">
        <path d="M317 526V576H367M312 571h10v9h-10zM319 509l6 6 6-6M325 515v7M371 562l13 12M384 562l-13 12" />
      </g>
    </svg>
  );
}

function ViewControls() {
  return (
    <div className="absolute top-[9px] right-[3px] flex w-[82px] flex-col items-center">
      <div className="flex items-center gap-[8px] self-end pr-[8px]">
        <button type="button" aria-label="Minimize view" className="mt-1 h-[5px] w-3 border border-[#777]" />
        <button type="button" aria-label="Restore view">
          <svg viewBox="0 0 12 12" className="size-3" fill="none" stroke="#666" strokeWidth="1.500">
            <path d="M1 3h8v8H1zM3 3V1h8v8H9M4 6h2v2H4z" />
          </svg>
        </button>
        <button type="button" aria-label="Close view">
          <svg viewBox="0 0 12 12" className="size-3" fill="none">
            <path d="M2 2l8 8M10 2l-8 8" stroke="#555" strokeWidth="4" />
            <path d="M2 2l8 8M10 2l-8 8" stroke="#fff" strokeWidth="1.500" />
          </svg>
        </button>
      </div>
      <div className="mt-[12px] mr-1 flex flex-col items-center text-[9px] leading-[14px] text-[#c4c4c4]">
        <span>N</span>
        <div className="my-2 flex items-center gap-[14px]">
          <span>W</span>
          <button type="button" className="size-[26px] border border-[#999] bg-[#ebebeb] font-['Liberation_Sans'] text-[8px] text-[#888]">
            TOP
          </button>
          <span>E</span>
        </div>
        <span>S</span>
      </div>
      <button type="button" className="mt-[10px] mr-1 flex h-[15px] w-[64px] items-center gap-2 self-center bg-[#efedf7] pl-0.5 font-['Liberation_Sans'] text-[10px] text-[#9b98a8]">
        Unnamed
        <svg viewBox="0 0 8 5" className="h-[4px] w-[7px]">
          <path d="M1 0l3 4 3-4" fill="none" stroke="#c4c0d4" />
        </svg>
      </button>
      <div className="mt-[25px] flex h-[216px] w-[35px] flex-col items-center self-end rounded-md border-2 border-[#d4d4d4] bg-[#f6f6f6]">
        <svg viewBox="0 0 32 212" className="w-full" fill="none" stroke="#dcdcdc" strokeWidth="1.200">
          <circle cx="26" cy="6" r="3" />
          <path d="M6 20h20v20H6zM2 57h28" />
          <circle cx="16" cy="30" r="9" />
          <circle cx="16" cy="30" r="4" />
          <path d="M9 76l-3-5M9 78V66M13 75V64M17 75V65M21 76V68M9 76c1 9 11 9 12 1M13 49h6l-3 3z" />
          <path d="M6 92l16 20M22 92L6 110M10 119h10M16 134v20M7 145h19M10 139l4 4" />
          <circle cx="20" cy="108" r="4" />
          <path d="M5 168h7v7H5zM13 168h7v7h-7zM21 168h7v7h-7zM5 178h15v12H5zM10 181l5 3-5 3z" />
          <circle cx="26" cy="205" r="3" />
        </svg>
      </div>
    </div>
  );
}

const target = (
  <>
    <circle cx="10" cy="9" r="4" stroke="#e0e0e0" strokeWidth="2" />
    <path d="M10 0v5M10 13v5M1 9h5M14 9h5" stroke="#e0e0e0" strokeWidth="2" />
  </>
);

const curve = (
  <>
    <path d="M1 7h12c9 0 9 13-1 13" stroke="#bbb" strokeWidth="2" strokeDasharray="3 1.500" />
    <path d="M9 3v18" stroke="#a84040" strokeWidth="1.500" />
    <circle cx="9" cy="7" r="2.500" fill="#ffd0d0" stroke="#d33" />
  </>
);

const sideTools: ([string, ReactNode] | null)[] = [
  ["Angle distance", <><path d="M1 3h20v15C10 18 3 12 1 3z" fill="#a9c6e6" /><path d="M1 2h22M4 2l17 17M1 20l20-17" stroke="#e4ecf4" strokeWidth="1.600" /></>],
  ["Bearing distance", <><path d="M3 3c8 1 12 6 13 9L5 18z" fill="#c0d2e4" /><path d="M5 20L22 7" stroke="#e4e4e4" strokeWidth="1.600" /><path d="M2 22h21" stroke="#e4e4e4" strokeWidth="1.600" strokeDasharray="3 1.500" /></>],
  ["Azimuth distance", <><path d="M8 2c10 1 13 8 13 19L9 16z" fill="#c3d8ee" /><path d="M8 2v14l13 5" stroke="#889" /></>],
  ["Deflection distance", <><path d="M5 4c5 1 9 5 9 8l-8 4z" fill="#cfcfe8" /><path d="M4 2l3 13v8M6 17L22 5" stroke="#d8d8e8" strokeWidth="1.800" /></>],
  ["Northing easting", <><path d="M3 2h10l5 5v14H3z" fill="#ddd" /><path d="M7 2v19M11 8v10" stroke="#666" /><rect x="13" y="13" width="9" height="9" fill="#aaa" stroke="#333" /></>],
  ["Grid northing", <><circle cx="11" cy="11" r="9" fill="#6fb6c8" stroke="#bde4ea" /><path d="M4 8c4 4 9 2 12-3" stroke="#e8f6f8" strokeWidth="2" /><rect x="13" y="13" width="9" height="9" fill="#aaa" stroke="#333" /></>],
  ["Latitude longitude", <><circle cx="12" cy="12" r="10" fill="#d6d6ca" /><path d="M12 2v20M2 12h20M4 7h16M4 17h16M7 4v16M17 4v16" stroke="#8a8a86" /></>],
  ["Point number", <>{target}<path d="M17 14v8M21 14v8M15 16h8M15 20h8" stroke="#eee" /></>],
  ["Point name", <>{target}<path d="M15 22l3-8 3 8M16 19h4" stroke="#eee" strokeWidth="1.500" /></>],
  ["Point object", <>{target}<path d="M13 6l9 10-5 0-1 6z" fill="#f0f0f0" /></>],
  ["Zoom to point", <>{target}<circle cx="17" cy="15" r="5" fill="#ddd" /><path d="M20 19l3 4" stroke="#ddd" strokeWidth="2" /></>],
  ["Side shot", <><path d="M4 3v19" stroke="#ccc" strokeWidth="1.500" strokeDasharray="2 2" /><path d="M9 9l12-6-1 12-5 4z" fill="#d4d0f4" stroke="#908cc8" /></>],
  ["Station offset", curve],
  null,
  ["Profile station", <>{target}<path d="M2 17l4-2 1 5zM17 16h5v6z" fill="#ccc" stroke="#222" /></>],
  null,
  ["Station object", curve],
  ["Offset object", <><circle cx="10" cy="5" r="4" fill="#ddd" /><path d="M1 17h12c8 0 9 3 9 6" stroke="#bbb" strokeWidth="2" strokeDasharray="3 1.500" /><circle cx="9" cy="17" r="2.500" fill="#ffd0d0" stroke="#d33" /></>],
];

function SideToolbar() {
  return (
    <div className="ml-[4px] flex w-[24px] flex-col items-center gap-[4px] overflow-hidden border border-[#3c3c3c] bg-[#535353] pt-[3px]">
      <span className="h-[5px] w-4 border-y border-dotted border-[#999]" />
      {sideTools.map((t, i) =>
        t ? (
          <button type="button" key={i} aria-label={t[0]} className="h-[18px] shrink-0">
            <Icon className="size-[18px]">{t[1]}</Icon>
          </button>
        ) : (
          <span key={i} className="h-0.5 w-[19px] shrink-0 bg-[#c8c8c8]" />
        ),
      )}
    </div>
  );
}

function CommandLine() {
  return (
    <div className="flex h-[68px] border-t-2 border-[#4a4a4a] font-['DejaVu_Sans_Mono',monospace] text-lg">
      <div className="flex w-[29px] flex-col items-center bg-linear-to-b from-[#4a4a4a] via-[#666666] to-[#3c3c3c] pt-[6px]">
        <span className="h-[6px] w-[22px] border-y-2 border-dotted border-[#999]" />
        <button type="button" aria-label="Close command line" className="mt-[11px]">
          <svg viewBox="0 0 12 12" className="size-[11px]">
            <path d="M1 1l10 10M11 1L1 11" stroke="#fff" strokeWidth="2.500" />
          </svg>
        </button>
        <button type="button" aria-label="Customize command line" className="mt-[13px]">
          <svg viewBox="0 0 18 18" className="size-[17px]">
            <path d="M1 6l3 2 3-2V2L5 0c4-1 7 3 6 7l7 7c0 3-2 4-4 3L8 10C4 12 0 10 1 6z" fill="#e4e4e4" />
          </svg>
        </button>
      </div>
      <div className="flex min-w-0 flex-1 flex-col">
        <div className="h-[37px] border-b border-[#999] bg-[#c6c6c6] pt-[5px] pl-[3px] leading-[37px] text-[#1e1e1e]">Command: *Cancel*</div>
        <div className="flex flex-1 items-center bg-white pl-[6px]">
          <button type="button" aria-label="Recent commands" className="flex items-center gap-1">
            <svg viewBox="0 0 20 17" className="h-[17px] w-[19px]">
              <rect x=".5" y=".5" width="19" height="16" fill="#dcdce0" stroke="#aaa" />
              <path d="M4 4l5 4-5 4M10 13h6" fill="none" stroke="#666" strokeWidth="1.800" />
            </svg>
            <svg viewBox="0 0 8 5" className="h-[4px] w-[7px]">
              <path d="M0 0h8L4 5z" fill="#777" />
            </svg>
          </button>
          <input
            type="text"
            aria-label="Command"
            placeholder="Type a command"
            className="ml-[10px] h-[26px] min-w-0 flex-1 italic placeholder:text-[#8e8e8e]"
          />
        </div>
      </div>
    </div>
  );
}

function LayoutTab({ label, active, className }: { label: ReactNode; active?: boolean; className: string }) {
  return (
    <button type="button" className={`relative flex h-[22px] items-center justify-center ${className}`}>
      <svg viewBox="0 0 80 22" preserveAspectRatio="none" className="absolute inset-0 size-full">
        <path d="M0 0h80c-7 2-5 20-13 22H13C5 20 7 2 0 0z" fill={active ? "#7c7c7c" : "#525252"} />
      </svg>
      <span className={`relative ${active ? "font-bold text-white" : "text-[#a0a0a0]"}`}>{label}</span>
    </button>
  );
}

function StatusCell({ children, className }: { children: ReactNode; className: string }) {
  return <div className={`flex shrink-0 items-center border border-r-0 border-[#767676] bg-[#505050] ${className}`}>{children}</div>;
}

function StatusButton({ label, children, className = "w-[30px]" }: { label: string; children: ReactNode; className?: string }) {
  return (
    <button type="button" aria-label={label} className={`flex shrink-0 items-center justify-center ${className}`}>
      <Icon className="size-[21px]">{children}</Icon>
    </button>
  );
}

function StatusBar() {
  return (
    <footer className="flex h-[34px] items-stretch text-sm text-[#ededed]">
      <div className="min-w-0 flex-1 bg-[#383838]" />
      <StatusCell className="w-[264px] justify-end pr-[7px]">676178.7053, 659068.0978, 0.0000</StatusCell>
      <StatusCell className="w-[63px] justify-center">
        <button type="button">MODEL</button>
      </StatusCell>
      <StatusCell className="w-[31px]">
        <StatusButton label="Dynamic input">
          <path d="M6 2v10M1 7h10" stroke="#c8c8c8" strokeWidth="1.800" />
          <rect x="10" y="14" width="13" height="6" fill="#d8d8d8" />
          <path d="M13 15v4" stroke="#777" />
        </StatusButton>
      </StatusCell>
      <StatusCell className="w-[80px]">
        <StatusButton label="Ortho mode">
          <path d="M4 3v17h18M4 13h7v7" stroke="#a4a4a4" strokeWidth="2" />
        </StatusButton>
        <StatusButton label="Polar tracking">
          <circle cx="11" cy="11" r="9" stroke="#b4b4b4" strokeWidth="2.200" />
          <path d="M11 4v7h12M11 11l5 6" stroke="#b4b4b4" strokeWidth="2" />
        </StatusButton>
        <Caret label="Polar options" className="ml-1 text-white" />
      </StatusCell>
      <StatusCell className="w-[80px]">
        <StatusButton label="Object snap tracking">
          <path d="M1 21h22M3 20L18 5" stroke="#a4a4a4" strokeWidth="2" />
          <path d="M8 14h5v5z" fill="#ddd" />
        </StatusButton>
        <StatusButton label="Object snap" className="w-[34px]">
          <rect x="3" y="4" width="18" height="18" stroke="#2f86ee" strokeWidth="2.600" />
          <circle cx="5" cy="5" r="4" fill="#0c6a30" />
        </StatusButton>
        <Caret label="Snap options" className="text-white" />
      </StatusCell>
      <StatusCell className="w-[31px]">
        <StatusButton label="Lineweight">
          <path d="M1 4h22M1 9h13M17 9h6M1 14h22" stroke="#c4c4c4" strokeWidth="2.400" />
          <path d="M1 19h12" stroke="#c4c4c4" strokeWidth="4" />
        </StatusButton>
      </StatusCell>
      <StatusCell className="w-[31px]">
        <StatusButton label="Transparency">
          <rect x="2" y="2" width="20" height="20" fill="#3a8cf0" />
          <path d="M2 5h20M2 11h20M2 17h20M4 8h18M4 14h18M4 20h18" stroke="#2468b8" strokeWidth="1.400" strokeDasharray="2 2" />
        </StatusButton>
      </StatusCell>
      <StatusCell className="w-[33px]">
        <StatusButton label="Selection cycling">
          <path d="M5 1v9M1 5h9" stroke="#ccc" strokeWidth="1.600" />
          <path d="M8 9h10v10H8z" stroke="#9ab87a" strokeWidth="1.600" />
          <rect x="11" y="12" width="12" height="11" fill="#9dbb7c" />
        </StatusButton>
      </StatusCell>
      <StatusCell className="w-[34px]">
        <StatusButton label="Dynamic UCS">
          <path d="M4 3v18h18M1 5l3-3 3 3M19 18l3 3-3 3M8 17l6-6" stroke="#c4c4c4" strokeWidth="1.800" />
          <path d="M17 2l-4 8h5l-2 6 7-9h-4l3-5z" fill="#d4d4d4" />
        </StatusButton>
      </StatusCell>
      <StatusCell className="w-[169px]">
        <StatusButton label="Annotation visibility">
          <path d="M10 2l4 11 8 8-4 2-6-6-7 6-4-1 8-9z" fill="#2f86ee" />
          <circle cx="17" cy="6" r="4.500" fill="#1e62be" stroke="#4d9df4" strokeWidth="2" />
        </StatusButton>
        <StatusButton label="Auto scale">
          <path d="M9 2l4 11 8 8-4 2-5-6-7 6-4-2 8-8z" fill="#c4c4c4" />
          <path d="M19 1l-5 8h4l-2 6 7-8h-4z" fill="#ddd" />
        </StatusButton>
        <StatusButton label="Annotation scale">
          <path d="M12 1l3 12 8 8-3 2-8-5-8 5-3-2 8-8z" fill="#c8c8c8" />
        </StatusButton>
        <button type="button" className="ml-[4px] whitespace-nowrap">1" = 10'</button>
        <Caret label="Scale list" className="ml-[9px] text-white" />
      </StatusCell>
      <StatusCell className="w-[51px]">
        <StatusButton label="Workspace">
          <path
            d="M12 1l2 3 4-1 1 4 4 1-1 4 1 4-4 1-1 4-4-1-2 3-2-3-4 1-1-4-4-1 1-4-1-4 4-1 1-4 4 1z"
            transform="translate(2 2) scale(.84)"
            fill="#c4c4c4"
          />
          <circle cx="12" cy="12" r="3" fill="#505050" />
        </StatusButton>
        <Caret label="Workspace list" className="ml-1 text-white" />
      </StatusCell>
      <StatusCell className="w-[32px]">
        <StatusButton label="Annotation monitor">
          <path d="M12 2v20M2 12h20" stroke="#bcbcbc" strokeWidth="2.800" />
        </StatusButton>
      </StatusCell>
      <StatusCell className="w-[33px]">
        <StatusButton label="Quick properties">
          <path d="M2 2h8v8H2zM10 14l5 8H6z" stroke="#b8b8b8" strokeWidth="2" />
          <circle cx="18" cy="10" r="4.500" stroke="#b8b8b8" strokeWidth="2" />
        </StatusButton>
      </StatusCell>
      <StatusCell className="w-[34px]">
        <StatusButton label="Hardware acceleration">
          <circle cx="12" cy="12" r="11" fill="#0e5cc0" stroke="#2a86ee" strokeWidth="2" />
          <path d="M11 15l2 1 4-5" stroke="#5ca4f0" strokeWidth="1.500" />
        </StatusButton>
      </StatusCell>
      <StatusCell className="w-[94px] gap-[8px]">
        <StatusButton label="Elevation">
          <path d="M2 8l10-5 10 5-10 5z" fill="#b4c690" />
          <path d="M2 13l10 5 10-5v4l-10 6-10-6z" fill="#d8d8d8" />
          <path d="M2 10l10 5 10-5" stroke="#8aa060" strokeWidth="2" />
          <path d="M3 4c4-4 14-4 18 0" stroke="#aaa" strokeDasharray="2 2" />
        </StatusButton>
        <span>3.5000</span>
      </StatusCell>
      <StatusCell className="w-[31px]">
        <StatusButton label="Survey database">
          <path d="M2 2h11v8H2z" fill="#8cc0ea" />
          <path d="M4 4h4v4" stroke="#eef" strokeWidth="2" />
          <path d="M3 13l11-4 7 5-5 7H3z" fill="#f2cf3c" />
          <path d="M12 18l4 4 7-9" stroke="#4ca832" strokeWidth="3.500" />
          <circle cx="16" cy="6" r="3" fill="#dfe8ee" />
        </StatusButton>
      </StatusCell>
      <StatusCell className="w-[62px] border-r">
        <StatusButton label="Clean screen">
          <rect x="1" y="4" width="22" height="16" stroke="#c4c4c4" strokeWidth="2" />
          <path d="M13 7h7v6zM4 11v6h7z" fill="#ccc" />
          <path d="M14 12l4-4M6 16l4-4" stroke="#ccc" strokeWidth="2" />
        </StatusButton>
        <StatusButton label="Customization">
          <path d="M1 5h22M1 12h22M1 19h22" stroke="#c4c4c4" strokeWidth="2.600" />
        </StatusButton>
      </StatusCell>
    </footer>
  );
}

export default function App() {
  return (
    <div className="flex min-h-screen flex-col border-x-[3px] border-b-2 border-black bg-[#5c5c5c] pb-[3px] font-['Open_Sans',sans-serif] leading-[normal]">
      <div className="mx-0.5 flex flex-1 flex-col">
        <TitleBar />
        <RibbonTabs />
        <Ribbon />
        <FileTabs />
        <main className="flex min-h-0 flex-1">
          <Toolspace />
          <div className="ml-[3px] flex min-w-0 flex-1 flex-col">
            <div className="flex min-h-0 flex-1 pt-[4px] pr-px">
              <div className="relative min-w-0 flex-1 overflow-hidden bg-white">
                <Drawing />
                <span className="absolute top-[6px] left-1 text-[11px] font-bold text-[#333]">[−][Top][2D Wireframe]</span>
                <ViewControls />
              </div>
              <div className="relative w-[30px]">
                <div className="absolute inset-0 flex">
                  <SideToolbar />
                </div>
              </div>
            </div>
            <CommandLine />
          </div>
        </main>
        <div className="flex h-[26px] items-start bg-[#383838] pl-[12px] text-sm">
          <LayoutTab label="Model" active className="w-[76px]" />
          <LayoutTab label="Layout1" className="w-[79px]" />
          <LayoutTab label="Layout2" className="w-[83px]" />
          <LayoutTab
            className="w-[34px]"
            label={
              <svg viewBox="0 0 12 12" className="size-[11px]" aria-label="New layout">
                <path d="M6 0v12M0 6h12" stroke="#b8b8b8" strokeWidth="2.500" />
              </svg>
            }
          />
        </div>
        <StatusBar />
      </div>
    </div>
  );
}
